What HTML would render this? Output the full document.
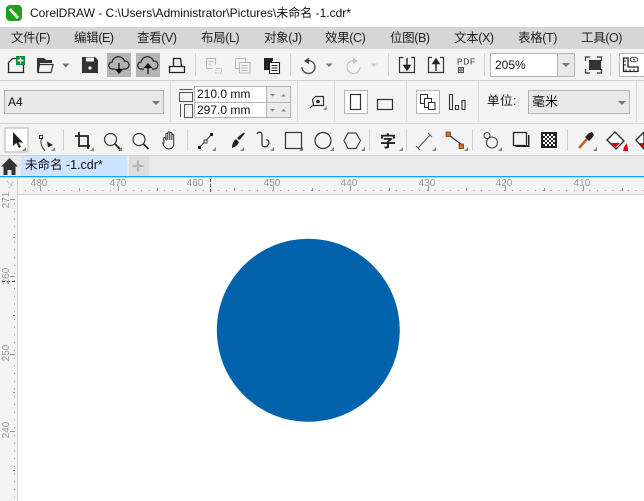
<!DOCTYPE html>
<html lang="zh">
<head>
<meta charset="utf-8">
<title>CorelDRAW</title>
<style>
html,body{margin:0;padding:0;width:644px;height:501px;overflow:hidden;background:#f3f3f3}
body{position:relative;font-family:"Liberation Sans","Noto Sans CJK SC",sans-serif;color:#1a1a1a}
.a{position:absolute;white-space:nowrap}
.m{top:28px;height:20px;line-height:20px;font-size:12.500px;letter-spacing:-.4px;color:#222}
svg{position:absolute;left:0;top:0}
</style>
</head>
<body>
<div class="a" style="left:0;top:0;width:644px;height:27px;background:#fff"></div>
<div class="a" style="left:0;top:27px;width:644px;height:22px;background:#d6d6d6"></div>
<div class="a" style="left:0;top:155px;width:644px;height:21px;background:#e9e9e9"></div>
<div class="a" style="left:0;top:194px;width:644px;height:307px;background:#f3f3f3"></div>
<div class="a" style="left:18px;top:195px;width:626px;height:306px;background:#fff"></div>

<svg width="644" height="501" viewBox="0 0 644 501" fill="none">
<!-- app icon -->
<rect x="6" y="5" width="16" height="16" rx="4" fill="#1fa01f"/>
<path d="M10 9l8 9" stroke="#e8ffe8" stroke-width="3"/>
<!-- row separators -->
<path d="M0 80.500H644M0 123.500H644M0 155.500H644" stroke="#d2d2d2"/>
<path d="M195.500 54V76M290.500 54V76M388.500 54V76M484.500 54V76M610.500 54V76" stroke="#d0d0d0"/>
<path d="M170.500 81V122M297.500 81V122M334.500 81V122M406.500 81V122M478.500 81V122M636.500 81V122" stroke="#d8d8d8"/>
<path d="M63.500 129V151M187.500 129V151M369.500 129V151M406.500 129V151M472.500 129V151M567.500 129V151" stroke="#d0d0d0"/>

<!-- new -->
<path d="M8.500 62.500L12.500 58.500H18M8.500 62.500V72.500H23.500V63" stroke="#222" stroke-width="1.300"/>
<rect x="16" y="56" width="9" height="9" fill="#0a8f3a"/>
<path d="M20.500 57.500v6M17.500 60.500h6" stroke="#fff" stroke-width="1.500"/>
<!-- open -->
<path d="M37 58h7l2 2h6v3H40l-1.500 9H37z" fill="#333"/>
<path d="M39.500 64.500H53L51 72.500H38z" stroke="#333" stroke-width="1.200"/>
<path d="M62 63.500h7.500l-3.750 4z" fill="#777"/>
<!-- save -->
<path d="M82 57h13l3 3v13H82z" fill="#333"/>
<rect x="86" y="57.500" width="8" height="4" fill="#f3f3f3"/>
<circle cx="90" cy="68" r="1.600" fill="#f3f3f3"/>
<!-- cloud buttons -->
<rect x="107" y="53" width="24" height="24" fill="#b4b4b4"/>
<rect x="136" y="53" width="24" height="24" fill="#b4b4b4"/>
<path d="M115 69h-2.500a3.500 3.500 0 0 1-.5-7 6.500 6.500 0 0 1 12.500-1 4 4 0 0 1 1 8H123" stroke="#222" stroke-width="1.200"/>
<path d="M119 63v9M116 69.500l3 3.500 3-3.500z" stroke="#111" stroke-width="1.300" fill="#111"/>
<path d="M144 69h-2.500a3.500 3.500 0 0 1-.5-7 6.500 6.500 0 0 1 12.500-1 4 4 0 0 1 1 8H152" stroke="#222" stroke-width="1.200"/>
<path d="M148 74v-9M145 67.500l3-3.500 3 3.500z" stroke="#111" stroke-width="1.300" fill="#111"/>
<!-- print -->
<path d="M173.500 66.500V58.500H180.500L181.500 66.500M169.500 66.500H184.500V72.500H169.500Z" stroke="#222" stroke-width="1.300"/>
<!-- disabled clipboard -->
<path d="M206.500 58.500h9v6M206.500 58.500v10h6M208.500 61.500h5M208.500 64h3" stroke="#b8b8b8" stroke-width="1.100"/>
<path d="M216 68.500h5.500v4.500H216z" stroke="#b8b8b8" stroke-dasharray="1.500 1"/>
<path d="M235.500 58.500h10v4M235.500 58.500v10h4M239.500 62.500h10.500v10.500H239.500zM241.500 65.500h6M241.500 68h6M241.500 70.500h6" stroke="#b8b8b8" stroke-width="1.100"/>
<!-- paste -->
<path d="M264 58h9v3h-1v9h-8z" fill="#222"/>
<path d="M269.500 62.500h10v11h-10z" fill="#f3f3f3" stroke="#222" stroke-width="1.100"/>
<path d="M271.500 65.500h6M271.500 68h6M271.500 70.500h6" stroke="#222"/>
<!-- undo redo -->
<path d="M306 61a6.500 6.500 0 1 1-4 6" stroke="#444" stroke-width="1.300"/>
<path d="M309 57.500v6.500l-5-3z" fill="#444"/>
<path d="M325.500 63.500h7l-3.500 3.500z" fill="#777"/>
<path d="M356 61a6.500 6.500 0 1 0 4 6" stroke="#c4c4c4" stroke-width="1.300"/>
<path d="M353 57.500v6.500l5-3z" fill="#c4c4c4"/>
<path d="M370.500 63.500h7l-3.500 3.500z" fill="#ccc"/>
<!-- import export -->
<path d="M403.500 57.500H399.500V72.500H414.500V57.500H411" stroke="#333" stroke-width="1.200"/>
<path d="M407 58v11M404 65.500h6L407 70z" stroke="#222" stroke-width="1.400" fill="#222"/>
<path d="M432 57.500H428.500V72.500H443.500V57.500H440" stroke="#333" stroke-width="1.200"/>
<path d="M436 71V60M433 63.500h6L436 59z" stroke="#222" stroke-width="1.400" fill="#222"/>
<text x="457" y="64.500" font-size="8.500" fill="#333" font-family="Liberation Sans" letter-spacing=".6">PDF</text>
<path d="M458.500 67.500h5v5h-5zM461 67v6M458.500 70h5" stroke="#444" stroke-width=".9"/>
<!-- zoom combo -->
<rect x="490.500" y="53.500" width="84" height="23" fill="#fff" stroke="#b3b3b3"/>
<rect x="558" y="54" width="16" height="22" fill="#e8e8e8"/>
<path d="M557.500 54V76" stroke="#b3b3b3"/>
<path d="M562 63h8l-4 4z" fill="#777"/>
<!-- full screen -->
<rect x="589" y="60" width="12" height="10" fill="#333"/>
<path d="M585.500 61v-4h4.500M597 57h4.500v4M601.500 69v4H597M590 73h-4.500v-4" stroke="#333" stroke-width="1.200"/>
<!-- options -->
<rect x="619.500" y="53.500" width="28" height="23" fill="#fff" stroke="#b3b3b3"/>
<path d="M623.500 58v13.500H638V67H628V58z" stroke="#222" stroke-width="1.300"/>
<path d="M626 71v-2M630 71v-2M634 71v-2M624 61h2M624 65h2" stroke="#222"/>
<ellipse cx="634" cy="59.500" rx="3.800" ry="2.300" stroke="#444"/><circle cx="634" cy="59.500" r="1" fill="#444"/>

<!-- page size combo -->
<rect x="4.500" y="90.500" width="159" height="23" fill="#e8e8e8" stroke="#b3b3b3"/>
<path d="M152 101h8l-4 4z" fill="#777"/>
<!-- dims icons -->
<path d="M179.500 89.500h13M179.500 92.500h13v9h-13z" stroke="#555"/>
<path d="M184.500 104.500h8v13h-8zM180.500 104v13" stroke="#555"/>
<!-- inputs -->
<rect x="194.500" y="86.500" width="96" height="16" fill="#fff" stroke="#b3b3b3"/>
<rect x="194.500" y="102.500" width="96" height="15" fill="#fff" stroke="#b3b3b3"/>
<rect x="267" y="87" width="23" height="30" fill="#ececec"/>
<path d="M266.500 86V118M194 102.500H290" stroke="#b3b3b3"/>
<path d="M270 94h5l-2.500 2.500zM281 96.500h5l-2.500-2.500zM270 109h5l-2.500 2.500zM281 111.500h5l-2.500-2.500z" fill="#888"/>
<!-- rotate icon -->
<path d="M312.500 99.500l3-3h8v9h-10z" stroke="#333" stroke-width="1.200"/>
<circle cx="318" cy="101.500" r="1.800" fill="#222"/>
<path d="M313 105l-3 3" stroke="#444"/>
<path d="M323 110h4v-4z" fill="#888"/>
<!-- portrait landscape -->
<rect x="344.500" y="90.500" width="23" height="23" fill="#fff" stroke="#b3b3b3"/>
<rect x="350.500" y="94.500" width="10" height="15" stroke="#333" stroke-width="1.200"/>
<rect x="377.500" y="99.500" width="15" height="10" stroke="#333" stroke-width="1.200"/>
<!-- pages -->
<rect x="416.500" y="90.500" width="23" height="23" fill="#fff" stroke="#b3b3b3"/>
<path d="M420.500 94.500h7v9h-7z" stroke="#333" stroke-width="1.100"/>
<path d="M424.500 98.500h7v9h-7z" fill="#fff" stroke="#333" stroke-width="1.100"/>
<path d="M428.500 102.500h6.500v7h-6.500z" fill="#fff" stroke="#333" stroke-width="1.100"/>
<path d="M449.500 94.500h3v15h-3zM455.500 105.500h3v4h-3zM462 100.500h3v9h-3z" stroke="#333" stroke-width="1.100"/>
<!-- unit combo -->
<rect x="528.500" y="90.500" width="101" height="23" fill="#e8e8e8" stroke="#b3b3b3"/>
<path d="M618 101h8l-4 4z" fill="#777"/>

<!-- toolbox -->
<rect x="5" y="128" width="23" height="24" fill="#fff" stroke="#b3b3b3"/>
<path d="M13 132v14l3.500-3 2.500 5 2-1-2.500-4.500h4.500z" fill="#222"/>
<path d="M26 147v4h-4zM55 147v4h-4zM94 147v4h-4zM122 147v4h-4zM216 147v4h-4zM303 147v4h-4zM334 147v4h-4zM403 147v4h-4zM436 147v4h-4zM468 147v4h-4zM502 147v4h-4zM597 147v4h-4zM628 147v4h-4zM365 147v4h-4zM244 147v4h-4zM274 147v4h-4z" fill="#888"/>
<path d="M42 137c-2 5-1 9 3 14" stroke="#333"/>
<rect x="39.500" y="135.500" width="3" height="3" fill="#fff" stroke="#333"/>
<path d="M47 141.500l6 3.500-5 2.500z" fill="#222"/>
<path d="M79 132v14h11M75 136h13v13" stroke="#222" stroke-width="1.800"/>
<circle cx="110.500" cy="139.500" r="6" stroke="#333" stroke-width="1.200"/>
<path d="M115 144l5 5" stroke="#222" stroke-width="1.800"/>
<circle cx="139" cy="139.500" r="6" stroke="#333" stroke-width="1.200"/>
<path d="M143.500 144l5 5" stroke="#222" stroke-width="1.800"/>
<path d="M164 143c0-4-1-5 0-5.500s1.500 1 2 3V134.500c0-1.500 1.800-1.500 1.800 0V140 133c0-1.500 2-1.500 2 0v7-6.500c0-1.500 2-1.500 2 0V140v-4.500c0-1.500 1.900-1.500 1.900 0V144c0 3-2 5-5 5s-4.700-2-6-6z" stroke="#333" stroke-width="1"/>
<path d="M199 148l12-13" stroke="#333"/>
<rect x="198" y="146" width="3" height="3" fill="#222"/><rect x="204" y="140" width="3" height="3" fill="#f3f3f3" stroke="#222" stroke-width=".8"/><rect x="210" y="133" width="3" height="3" fill="#222"/>
<path d="M243 133c1-1 2 0 1.500 1l-5 6-2.500-2zM236 139l3 3c-1 3-4 5-7 6 0-3 1-7 4-9z" fill="#222"/>
<path d="M257 134c1.500-3 5-2 5 1v9c0 3 4 4 6 1s0-6-2-5" stroke="#333" stroke-width="1.300"/>
<rect x="285.500" y="132.500" width="16" height="16" stroke="#333" stroke-width="1.200"/>
<circle cx="323" cy="140.500" r="8" stroke="#333" stroke-width="1.200"/>
<path d="M344 140.500l4-7.500h8l4.500 7.500-4.500 8h-8z" stroke="#444" stroke-width="1.200"/>
<text x="380" y="147" font-size="16" font-weight="700" fill="#222" font-family="Noto Sans CJK SC">字</text>
<path d="M418 148l12-13M416 146l4 4M428 133l4 4" stroke="#555"/>
<path d="M449 135l13 10" stroke="#333" stroke-width="1.200"/>
<rect x="446" y="132" width="4.500" height="4.500" fill="#e86a10" stroke="#222" stroke-width=".6"/>
<rect x="459" y="144" width="4.500" height="4.500" fill="#e86a10" stroke="#222" stroke-width=".6"/>
<circle cx="487" cy="135.500" r="3" stroke="#444"/>
<circle cx="492" cy="142.500" r="5.500" fill="#f3f3f3" stroke="#444" stroke-width="1.100"/>
<path d="M513.500 132.500h13v13h-13z" stroke="#222" stroke-width="1.300"/>
<path d="M528 135h1.500v12h-14v-2H528z" fill="#222"/>
<rect x="541" y="132" width="16" height="16" fill="#222"/>
<path d="M543 134h2v2h-2zM547 134h2v2h-2zM551 134h2v2h-2zM545 136h2v2h-2zM549 136h2v2h-2zM553 136h2v2h-2zM543 138h2v2h-2zM547 138h2v2h-2zM551 138h2v2h-2zM545 140h2v2h-2zM549 140h2v2h-2zM553 140h2v2h-2zM543 142h2v2h-2zM547 142h2v2h-2zM551 142h2v2h-2zM545 144h2v2h-2zM549 144h2v2h-2zM553 144h2v2h-2z" fill="#fff"/>
<path d="M579 148l8-9" stroke="#c8641c" stroke-width="2.500"/>
<path d="M585 137l4 4 3-3 2-3-2-3-3 1z" fill="#222"/>
<path d="M607 140l8-8 9 9-8 8z" fill="#fff" stroke="#222" stroke-width="1.300"/>
<path d="M611 143h9l-4.500 4.500z" fill="#e8000d"/>
<path d="M624 147l3-4 1 8h-5z" fill="#e8000d"/>
<path d="M636 140l8-8v17z" fill="#fff" stroke="#222" stroke-width="1.300"/>
<path d="M639 143h5v5z" fill="#e8000d"/>

<!-- tab bar -->
<path d="M9.500 158L1 166.500h2.500V175h4v-5h4v5h4v-8.500H18z" fill="#333"/>
<rect x="21" y="156" width="106" height="20" fill="#cce4ff"/>
<rect x="129" y="156" width="20" height="20" fill="#dcdcdc"/>
<path d="M138 160.500v11M132.500 166h11" stroke="#b4b4b4" stroke-width="2"/>
<rect x="0" y="176" width="644" height="1.300" fill="#08a8f0"/>

<!-- top ruler -->
<path d="M18 194.500H644M17.500 177V501" stroke="#d0d0d0"/>
<path d="M25 190.500H644" stroke="#999" stroke-dasharray="1 6.730"/>
<path d="M40.500 186v5M118.500 186v5M273.500 186v5M350.500 186v5M428.500 186v5M505.500 186v5M583.500 186v5M79.500 188v3M157.500 188v3M234.500 188v3M312.500 188v3M389.500 188v3M466.500 188v3M544.500 188v3M622.500 188v3" stroke="#999"/>
<path d="M210.500 179V194" stroke="#555" stroke-dasharray="3 2"/>
<g font-family="Liberation Sans" font-size="10" fill="#999" text-anchor="middle">
<text x="39" y="186">480</text><text x="118" y="186">470</text><text x="195" y="186">460</text><text x="272" y="186">450</text><text x="349" y="186">440</text><text x="427" y="186">430</text><text x="504" y="186">420</text><text x="582" y="186">410</text>
</g>
<path d="M7 181l5 5M9 188l4-6" stroke="#aaa" stroke-dasharray="1 1"/>
<!-- left ruler -->
<path d="M14.500 203V501" stroke="#999" stroke-dasharray="1 6.730"/>
<path d="M10 199.500h5M10 276.500h5M10 354.500h5M10 431.500h5M13 237.500h2M13 315.500h2M13 392.500h2M13 470.500h2" stroke="#999"/>
<path d="M2 281.500H17" stroke="#555" stroke-dasharray="3 2"/>
<g font-family="Liberation Sans" font-size="10" fill="#999" text-anchor="middle">
<text transform="translate(9 200) rotate(-90)">271</text>
<text transform="translate(9 276) rotate(-90)">260</text>
<text transform="translate(9 353) rotate(-90)">250</text>
<text transform="translate(9 430) rotate(-90)">240</text>
</g>
<!-- circle -->
<circle cx="308.300" cy="330.300" r="91.500" fill="#0062ab"/>
</svg>

<div class="a" style="left:30px;top:5px;font-size:12px;line-height:17px;color:#111">CorelDRAW - C:\Users\Administrator\Pictures\未命名 -1.cdr*</div>

<div class="a m" style="left:11px">文件(F)</div>
<div class="a m" style="left:74px">编辑(E)</div>
<div class="a m" style="left:137px">查看(V)</div>
<div class="a m" style="left:201px">布局(L)</div>
<div class="a m" style="left:264px">对象(J)</div>
<div class="a m" style="left:325px">效果(C)</div>
<div class="a m" style="left:390px">位图(B)</div>
<div class="a m" style="left:454px">文本(X)</div>
<div class="a m" style="left:518px">表格(T)</div>
<div class="a m" style="left:581px">工具(O)</div>

<div class="a" style="left:495px;top:57px;font-size:12px;line-height:16px;color:#111">205%</div>
<div class="a" style="left:8px;top:94px;font-size:12px;line-height:16px;color:#111">A4</div>
<div class="a" style="left:197px;top:87px;font-size:12px;line-height:15px;color:#111">210.0 mm</div>
<div class="a" style="left:197px;top:103px;font-size:12px;line-height:15px;color:#111">297.0 mm</div>
<div class="a" style="left:487px;top:93px;font-size:12.500px;line-height:17px;color:#111;letter-spacing:.5px">单位:</div>
<div class="a" style="left:532px;top:93px;font-size:13px;line-height:17px;color:#111">毫米</div>
<div class="a" style="left:25px;top:157px;font-size:12.500px;line-height:17px;color:#111">未命名 -1.cdr*</div>
</body>
</html>
